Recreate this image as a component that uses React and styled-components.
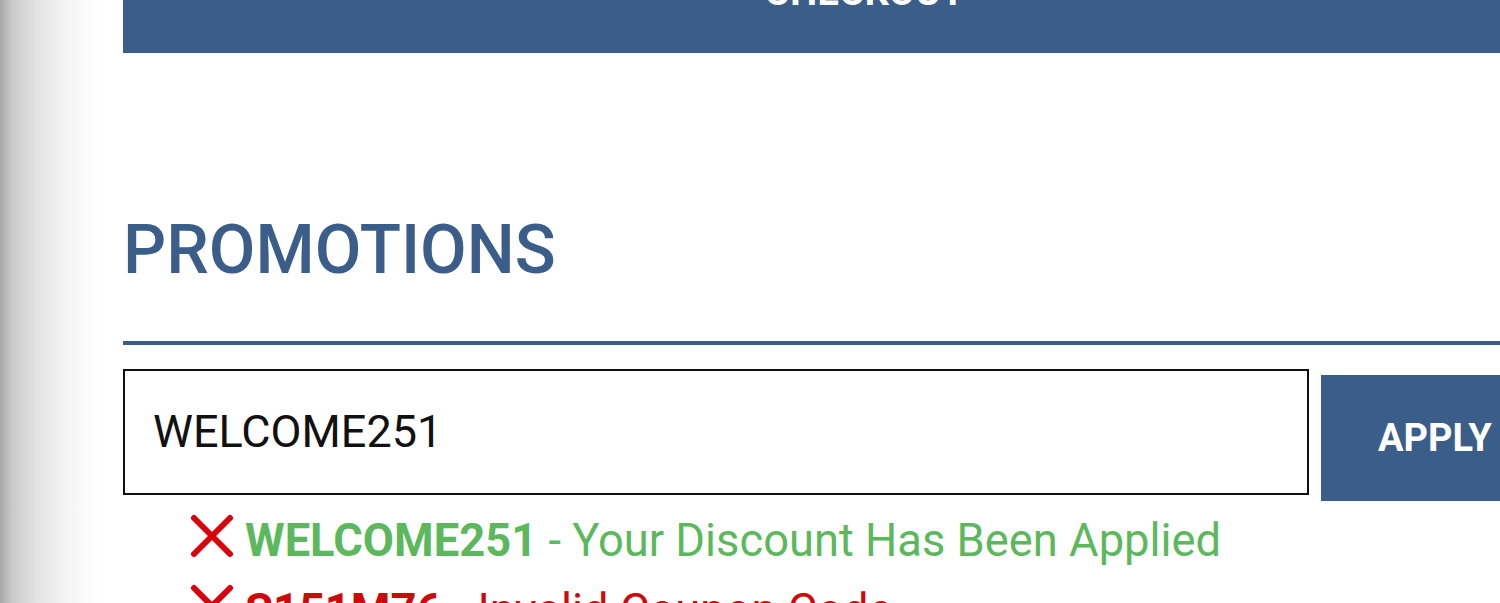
import React from 'react';
import styled, { createGlobalStyle } from 'styled-components';

const GlobalStyle = createGlobalStyle`
  html, body {
    margin: 0;
    padding: 0;
    background: #fff;
  }
  body {
    font-family: Roboto, "Liberation Sans", Arial, sans-serif;
    overflow: hidden;
  }
`;

const Page = styled.div`
  display: flex;
  align-items: flex-start;
  width: 1500px;
  height: 603px;
  overflow: hidden;
`;

const Shade = styled.div`
  flex: 0 0 123px;
  align-self: stretch;
  background: linear-gradient(
    to right,
    #a8a8a8 0,
    #c9c9c9 12px,
    #e2e2e2 35px,
    #f4f4f4 65px,
    #fdfdfd 92px,
    #fff 105px
  );
`;

const Main = styled.div`
  flex: 0 0 1484px;
  display: flex;
  flex-direction: column;
  & > * {
    flex-shrink: 0;
  }
`;

const CheckoutBar = styled.button`
  height: 53px;
  border: 0;
  padding: 0;
  background: #3b5d8a;
  color: #fff;
  display: flex;
  justify-content: center;
  align-items: flex-start;
  overflow: hidden;
  font-family: inherit;
`;

const CheckoutLabel = styled.span`
  font-size: 38px;
  font-weight: 700;
  line-height: 1;
  margin-top: -27px;
  letter-spacing: 0.5px;
`;

const Heading = styled.h2`
  margin: 164px 0 0;
  font-size: 67.7px;
  font-weight: 500;
  line-height: 1;
  color: #3b5d8a;
`;

const Rule = styled.hr`
  margin: 56px 0 0;
  border: 0;
  height: 4px;
  background: #3b5d8a;
`;

const PromoForm = styled.form`
  margin-top: 24px;
  display: flex;
  align-items: flex-start;
  gap: 12px;
`;

const CodeInput = styled.input`
  flex: 0 0 1186px;
  height: 126px;
  box-sizing: border-box;
  border: 2px solid #111;
  padding: 0 28px;
  font-family: inherit;
  font-size: 45px;
  color: #111;
  outline: none;
`;

const ApplyButton = styled.button`
  margin-top: 6px;
  height: 126px;
  border: 0;
  padding: 0 57px;
  background: #3b5d8a;
  color: #fff;
  font-family: inherit;
  font-size: 38px;
  font-weight: 700;
`;

const Messages = styled.ul`
  list-style: none;
  margin: 5px 0 0;
  padding: 0 0 0 67px;
`;

const Message = styled.li`
  display: flex;
  align-items: center;
  height: 70px;
  font-size: 45.3px;
  white-space: nowrap;
  color: ${p => (p.$ok ? '#5cb85c' : '#cc0a0a')};
`;

const Remove = styled.svg`
  flex: 0 0 44px;
  height: 44px;
  margin: -10px 11px 0 0;
`;

const Code = styled.strong`
  font-weight: 700;
`;

const CrossIcon = () => (
  <Remove viewBox="0 0 44 44">
    <path
      d="M4 4 L40 40 M40 4 L4 40"
      stroke="#d9000d"
      strokeWidth="6"
      strokeLinecap="round"
      fill="none"
    />
  </Remove>
);

const promos = [
  { code: 'WELCOME251', text: 'Your Discount Has Been Applied', ok: true },
  { code: 'S151M76', text: 'Invalid Coupon Code', ok: false },
];

export default function App() {
  return (
    <>
      <GlobalStyle />
      <Page>
        <Shade />
        <Main>
          <CheckoutBar type="button">
            <CheckoutLabel>CHECKOUT</CheckoutLabel>
          </CheckoutBar>
          <Heading>PROMOTIONS</Heading>
          <Rule />
          <PromoForm onSubmit={e => e.preventDefault()}>
            <CodeInput defaultValue="WELCOME251" />
            <ApplyButton type="submit">APPLY</ApplyButton>
          </PromoForm>
          <Messages>
            {promos.map(p => (
              <Message key={p.code} $ok={p.ok}>
                <CrossIcon />
                <Code>{p.code}</Code>&nbsp;- {p.text}
              </Message>
            ))}
          </Messages>
        </Main>
      </Page>
    </>
  );
}
